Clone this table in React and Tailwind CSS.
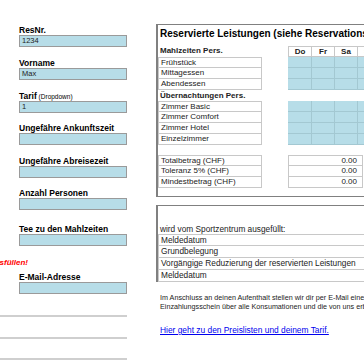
import React from "react";

const days = ["Do", "Fr", "Sa", "So"];
const dayW = ["w-[24px]", "w-[23px]", "w-[23px]", "w-[23px]"];

function Field({ label, hint, value, top }) {
  return (
    <div className={`flex flex-col pl-[19px] ${top}`}>
      <div className="h-[10px] leading-[10px] text-[8.5px] font-bold text-black whitespace-nowrap">
        {label}
        {hint && <span className="font-normal text-[6.5px]"> {hint}</span>}
      </div>
      <div className="h-[12px] w-[108px] bg-[#b7dde8] border border-[#9a9a9a] pl-[2px] text-[7.5px] leading-[10px] text-[#222]">
        {value}
      </div>
    </div>
  );
}

function LabelCell({ children, first, bold }) {
  return (
    <div
      className={`w-[104px] h-full shrink-0 border-x border-b border-[#c8c8c8] pl-[2px] text-[8px] leading-[10px] text-[#222] whitespace-nowrap ${
        first ? "border-t" : ""
      } ${bold ? "font-bold" : ""}`}
    >
      {children}
    </div>
  );
}

function BlueRow({ label, first }) {
  return (
    <div className="flex h-[11px]">
      <LabelCell first={first}>{label}</LabelCell>
      <div className="w-[26px] shrink-0" />
      {days.map((d, i) => (
        <div
          key={d}
          className={`${dayW[i]} h-full shrink-0 bg-[#b7dde8] border-r border-b border-[#a3c8d2]`}
        />
      ))}
    </div>
  );
}

function SumRow({ label, first }) {
  return (
    <div className="flex h-[11px]">
      <LabelCell first={first}>{label}</LabelCell>
      <div className="w-[26px] shrink-0" />
      <div
        className={`w-[75px] h-full shrink-0 border-x border-b border-[#c8c8c8] pr-[5px] text-right text-[8px] leading-[10px] text-[#222] ${
          first ? "border-t" : ""
        }`}
      >
        0.00
      </div>
    </div>
  );
}

function PlainRow({ children, first }) {
  return (
    <div
      className={`h-[12px] border-x border-b border-[#c8c8c8] pl-[2px] text-[8.3px] leading-[11px] text-[#222] whitespace-nowrap ${
        first ? "border-t" : ""
      }`}
    >
      {children}
    </div>
  );
}

export default function App() {
  return (
    <div className="w-[364px] h-[364px] overflow-hidden bg-white flex font-['Liberation_Sans',Arial,sans-serif]">
      {/* form fields */}
      <div className="w-[156px] shrink-0 flex flex-col">
        <Field label="ResNr." value="1234" top="mt-[25px]" />
        <Field label="Vorname" value="Max" top="mt-[11px]" />
        <Field label="Tarif" hint="(Dropdown)" value="1" top="mt-[11px]" />
        <Field label="Ungefähre Ankunftszeit" top="mt-[10px]" />
        <Field label="Ungefähre Abreisezeit" top="mt-[11px]" />
        <Field label="Anzahl Personen" top="mt-[10px]" />
        <Field label="Tee zu den Mahlzeiten" top="mt-[14px]" />
        <div className="mt-[12px] h-[10px] w-[28px] overflow-hidden flex justify-end">
          <span className="whitespace-nowrap text-[8px] leading-[10px] font-bold italic text-[#ff0000]">
            Bitte alle Felder ausfüllen!
          </span>
        </div>
        <Field label="E-Mail-Adresse" top="mt-[4px]" />
        <div className="mt-[21px] w-[127px] border-b-2 border-[#cfcfcf]" />
        <div className="mt-[20px] w-[127px] border-b-2 border-[#cfcfcf]" />
        <div className="mt-[19px] w-[127px] border-b-2 border-[#cfcfcf]" />
      </div>

      {/* reservation panel */}
      <div className="w-[300px] shrink-0 flex flex-col pt-[24px]">
        <div className="border-t border-b border-l-2 border-[#808080] flex flex-col">
          <div className="h-[21px] pl-[2px] text-[10px] leading-[18px] font-bold text-black whitespace-nowrap">
            Reservierte Leistungen (siehe Reservationsbestätigung)
          </div>

          <div className="flex h-[11px]">
            <div className="w-[104px] shrink-0 pl-[2px] text-[8px] leading-[10px] font-bold text-[#222]">
              Mahlzeiten Pers.
            </div>
            <div className="w-[26px] shrink-0" />
            {days.map((d, i) => (
              <div
                key={d}
                className={`${dayW[i]} h-full shrink-0 border-t border-r border-b border-[#c8c8c8] text-center text-[8px] leading-[9px] font-bold text-[#222] ${
                  i === 0 ? "border-l" : ""
                }`}
              >
                {d}
              </div>
            ))}
          </div>
          <BlueRow label="Frühstück" first />
          <BlueRow label="Mittagessen" />
          <BlueRow label="Abendessen" />

          <div className="h-[11px] pl-[2px] text-[8px] leading-[11px] font-bold text-[#222]">
            Übernachtungen Pers.
          </div>
          <BlueRow label="Zimmer Basic" first />
          <BlueRow label="Zimmer Comfort" />
          <BlueRow label="Zimmer Hotel" />
          <BlueRow label="Einzelzimmer" />

          <div className="h-[10px]" />
          <SumRow label="Totalbetrag (CHF)" first />
          <SumRow label="Toleranz 5% (CHF)" />
          <SumRow label="Mindestbetrag (CHF)" />
          <div className="h-[8px]" />
        </div>

        <div className="mt-[8px] border-t border-l-2 border-[#808080] flex flex-col">
          <div className="h-[16px]" />
          <div className="h-[12px] pl-[2px] text-[8.3px] leading-[14px] text-[#222] whitespace-nowrap">
            wird vom Sportzentrum ausgefüllt:
          </div>
          <PlainRow first>Meldedatum</PlainRow>
          <PlainRow>Grundbelegung</PlainRow>
          <PlainRow>Vorgängige Reduzierung der reservierten Leistungen</PlainRow>
          <PlainRow>Meldedatum</PlainRow>
        </div>

        <p className="mt-[11px] pl-[4px] text-[7.2px] leading-[9px] text-[#222] whitespace-nowrap">
          Im Anschluss an deinen Aufenthalt stellen wir dir per E-Mail eine Rechnung mit
          <br />
          Einzahlungsschein über alle Konsumationen und die von uns erbrachten Leistungen.
        </p>
        <a
          href="#"
          className="mt-[15px] pl-[4px] text-[8.4px] leading-[9px] text-[#0000ee] underline whitespace-nowrap"
        >
          Hier geht zu den Preislisten und deinem Tarif.
        </a>
      </div>
    </div>
  );
}
